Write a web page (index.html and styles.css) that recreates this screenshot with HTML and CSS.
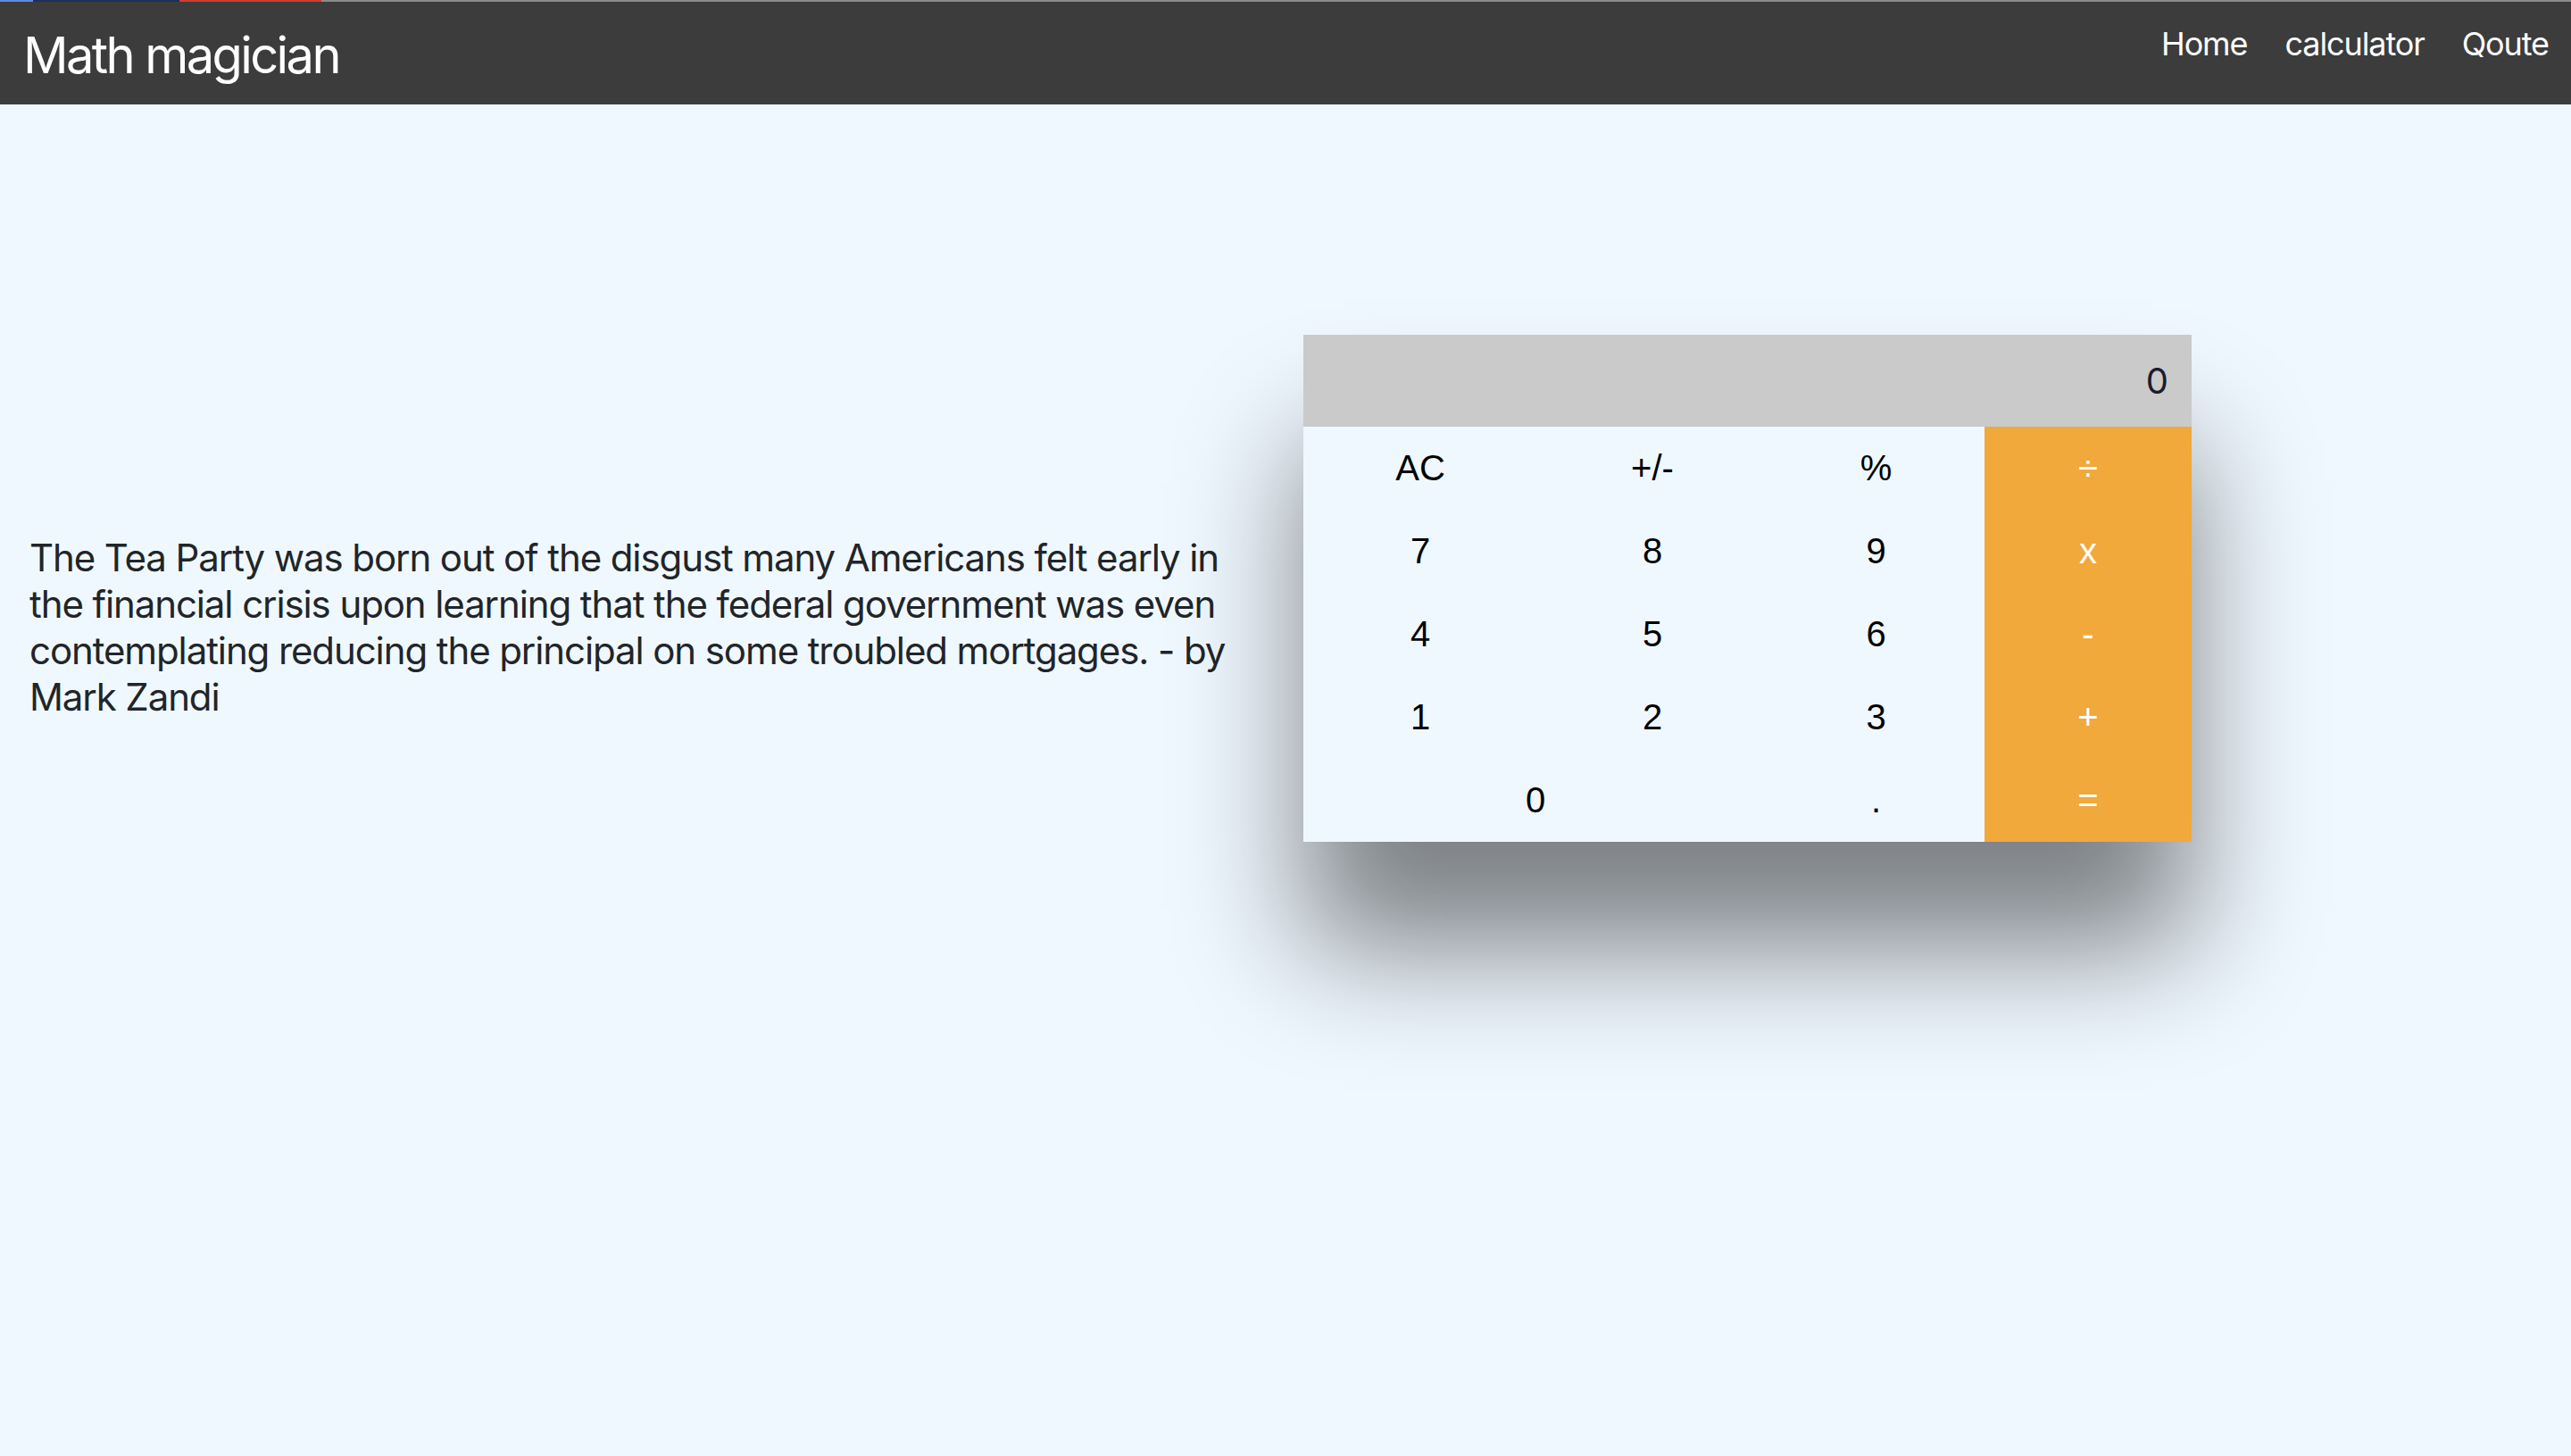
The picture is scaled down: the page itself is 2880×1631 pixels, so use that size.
FILE: index.html
```html
<!DOCTYPE html>
<html lang="en">
<head>
<meta charset="utf-8">
<title>Math magician</title>
<link rel="stylesheet" href="styles.css">
</head>
<body>
<div class="tabstrip">
  <span class="seg seg-blue"></span>
  <span class="seg seg-navy"></span>
  <span class="seg seg-red"></span>
  <span class="seg seg-rest"></span>
</div>
<header class="navbar">
  <h1 class="brand">Math magician</h1>
  <nav class="links">
    <a class="link" href="#">Home</a>
    <a class="link" href="#">calculator</a>
    <a class="link" href="#">Qoute</a>
  </nav>
</header>
<main class="content">
  <section class="quote">
    <p class="quote-text">The Tea Party was born out of the disgust many Americans felt early in the financial crisis upon learning that the federal government was even contemplating reducing the principal on some troubled mortgages. - by Mark Zandi</p>
  </section>
  <section class="calc">
    <div class="display">0</div>
    <div class="keys">
      <button class="key">AC</button>
      <button class="key">+/-</button>
      <button class="key">%</button>
      <button class="key op">÷</button>
      <button class="key">7</button>
      <button class="key">8</button>
      <button class="key">9</button>
      <button class="key op">x</button>
      <button class="key">4</button>
      <button class="key">5</button>
      <button class="key">6</button>
      <button class="key op">-</button>
      <button class="key">1</button>
      <button class="key">2</button>
      <button class="key">3</button>
      <button class="key op">+</button>
      <button class="key zero">0</button>
      <button class="key">.</button>
      <button class="key op">=</button>
    </div>
  </section>
</main>
</body>
</html>
```
FILE: styles.css
```css
* { box-sizing: border-box; }

html, body {
  margin: 0;
  padding: 0;
}

body {
  background: #f0f8ff;
  font-family: Inter, "Noto Sans", "Liberation Sans", sans-serif;
  color: #212529;
  min-height: 1631px;
}

.tabstrip {
  display: flex;
  height: 2px;
  background: #3c3c3c;
}

.seg { display: block; height: 2px; }
.seg-blue { width: 37px; background: #5b8de0; }
.seg-navy { width: 164px; background: #1f2f5c; }
.seg-red { width: 159px; background: #d23b2c; }
.seg-rest { flex: 1; background: #8a8a8a; }

.navbar {
  display: flex;
  justify-content: space-between;
  align-items: flex-start;
  height: 115px;
  background: #3c3c3c;
  padding: 0 25px 0 26px;
}

.brand {
  margin: 32px 0 0;
  font-size: 56px;
  line-height: 56px;
  font-weight: 400;
  letter-spacing: -2.6px;
  color: #ffffff;
}

.links {
  display: flex;
  gap: 42px;
  margin-top: 29px;
}

.link {
  font-size: 36px;
  line-height: 36px;
  letter-spacing: -1.1px;
  color: #ffffff;
  text-decoration: none;
}

.content {
  display: flex;
  align-items: flex-start;
}

.quote {
  flex: 0 0 1460px;
  padding: 482px 60px 0 33px;
}

.quote-text {
  margin: 0;
  font-size: 42px;
  line-height: 52px;
  letter-spacing: -1.1px;
  color: #212529;
}

.calc {
  flex: 0 0 995px;
  margin-top: 258px;
  box-shadow: 0 120px 130px rgba(0, 0, 0, 0.48);
}

.display {
  height: 103px;
  background: #cacaca;
  text-align: right;
  padding-right: 26px;
  font-size: 40px;
  line-height: 103px;
  color: #1b1b2f;
}

.keys {
  display: grid;
  grid-template-columns: 262fr 258fr 243fr 232fr;
  grid-auto-rows: 93px;
  background: #f0f8ff;
}

.key {
  border: none;
  margin: 0;
  padding: 0;
  background: #f0f8ff;
  font-family: "Liberation Sans", Arial, sans-serif;
  font-size: 40px;
  color: #000000;
}

.key.op {
  background: #f1a93b;
  color: #ffffff;
}

.key.zero {
  grid-column: span 2;
}
```
